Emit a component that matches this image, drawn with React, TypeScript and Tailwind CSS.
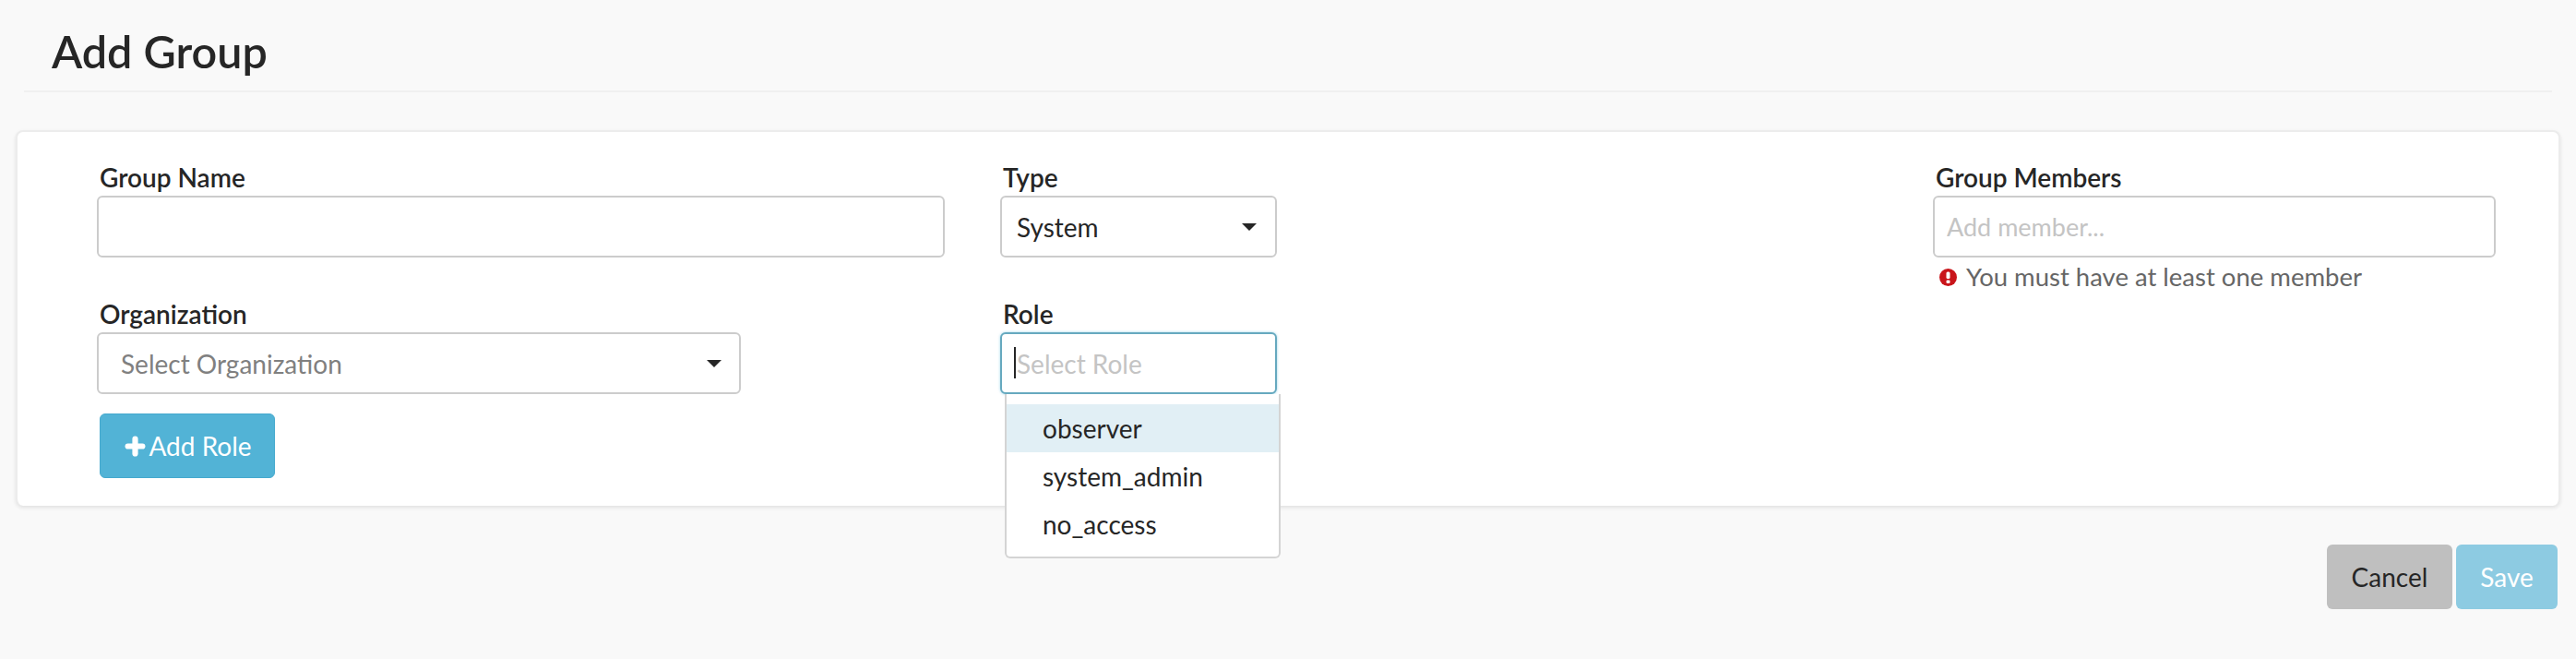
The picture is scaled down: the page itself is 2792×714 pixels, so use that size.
import { Plus } from 'lucide-react'

function Caret() {
  return <span className="block w-0 h-0 border-x-[8px] border-t-[8px] border-x-transparent border-t-[#262626]" />
}

function Label({ children }: { children: string }) {
  return <div className="h-[34px] pl-[3px] text-[28px] leading-[28px] font-semibold text-[#262626]">{children}</div>
}

function ErrorIcon() {
  return (
    <svg width="19" height="19" viewBox="0 0 19 19" className="shrink-0">
      <circle cx="9.5" cy="9.5" r="9.5" fill="#c9151b" />
      <rect x="7.5" y="3.5" width="4" height="7.5" rx="1.5" fill="#fff" />
      <rect x="7.5" y="12.5" width="4" height="3.5" rx="1.2" fill="#fff" />
    </svg>
  )
}

const boxClass = 'h-[67px] w-full rounded-[6px] border-2 border-[#cccccc] bg-white'

export default function App() {
  return (
    <div className="min-h-[714px] bg-[#f9f9f9] font-['Lato',sans-serif] text-[#262626]">
      <header className="mx-[26px] h-[100px] border-b-2 border-[#f0f0f0] pl-[30px] pt-[24px]">
        <h1 className="text-[48.5px] leading-[62px] font-semibold">Add Group</h1>
      </header>

      <section className="mx-[17px] mt-[41px] h-[407px] rounded-[8px] border-2 border-[#ececec] border-b-0 bg-white pl-[86px] pt-[35px] shadow-[0_2px_4px_rgba(0,0,0,0.1)]">
        <div className="flex">
          <div className="w-[919px]">
            <Label>Group Name</Label>
            <input className={`${boxClass} px-5 outline-none`} />
            <div className="mt-[47px]">
              <Label>Organization</Label>
              <div className={`${boxClass} flex !w-[698px] items-center justify-between pl-6 pr-[19px] text-[28px] text-[#808080]`}>
                <span>Select Organization</span>
                <Caret />
              </div>
            </div>
            <button className="ml-[3px] mt-[21px] flex h-[70px] w-[190px] items-center justify-center gap-[1px] rounded-[6px] border border-[#45a9ce] bg-[#52b3d6] text-[28px] text-white">
              <Plus size={27} strokeWidth={5.5} />
              <span>Add Role</span>
            </button>
          </div>

          <div className="ml-[60px] w-[300px]">
            <Label>Type</Label>
            <div className={`${boxClass} flex items-center justify-between pl-[16px] pr-[20px] text-[28px]`}>
              <span>System</span>
              <Caret />
            </div>
            <div className="relative mt-[47px]">
              <Label>Role</Label>
              <div className="relative flex h-[67px] items-center rounded-[6px] border-2 border-[#66a9bf] bg-white pl-[16px] text-[28px] text-[#c4c4c4] shadow-[0_0_3px_rgba(82,179,214,0.6)]">
                <span>Select Role</span>
                <span className="absolute left-[13px] top-[14px] h-[34px] w-[2px] bg-[#262626]" />
              </div>
              <ul className="absolute left-[5px] top-[101px] h-[178px] w-[299px] rounded-b-[6px] border-2 border-t-0 border-[#d4d4d4] bg-white pt-[11px] text-[28px] leading-[52px] z-10">
                <li className="h-[52px] bg-[#e1eff5] pl-[39px]">observer</li>
                <li className="h-[52px] pl-[39px]">system_admin</li>
                <li className="h-[52px] pl-[39px]">no_access</li>
              </ul>
            </div>
          </div>

          <div className="ml-[711px] w-[610px]">
            <Label>Group Members</Label>
            <input placeholder="Add member..." className={`${boxClass} px-[13px] text-[27px] outline-none placeholder:text-[#c4c4c4]`} />
            <div className="mt-[3px] flex items-center gap-[10px] pl-[7px] text-[27.5px] leading-[36px] text-[#666666]">
              <ErrorIcon />
              <span>You must have at least one member</span>
            </div>
          </div>
        </div>
      </section>

      <div className="mr-[20px] mt-[42px] flex justify-end gap-1">
        <button className="h-[70px] w-[136px] rounded-[6px] bg-[#bfbfbf] text-[28px] text-[#262626]">Cancel</button>
        <button className="h-[70px] w-[110px] rounded-[6px] bg-[#8dcbe2] text-[28px] text-white">Save</button>
      </div>
    </div>
  )
}
